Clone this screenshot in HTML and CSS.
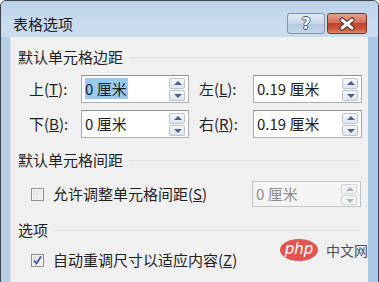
FILE: index.html
```html
<!DOCTYPE html>
<html lang="zh-CN">
<head>
    <meta charset="UTF-8">
    <title>表格选项</title>
    <link rel="stylesheet" href="styles.css">
</head>
<body>
    <div class="window">
        <div class="titlebar">
            <span class="title">表格选项</span>
            <div class="caption-btns">
                <button class="cap-btn help">?</button>
                <button class="cap-btn close">
                    <svg width="18" height="14" viewBox="0 0 18 14">
                        <path d="M4 3 L14 11 M14 3 L4 11" stroke="#4a2a24" stroke-width="5" stroke-linecap="round"/>
                        <path d="M4 3 L14 11 M14 3 L4 11" stroke="#fff" stroke-width="3" stroke-linecap="round"/>
                    </svg>
                </button>
            </div>
        </div>
        <div class="content">
            <div class="group-title first"><span>默认单元格边距</span></div>
            <div class="margins">
                <label>上(<u>T</u>):</label>
                <div class="spin"><span class="val"><span class="sel">0 厘米</span></span><div class="arrows"><span class="up"></span><span class="down"></span></div></div>
                <label class="right-label">左(<u>L</u>):</label>
                <div class="spin"><span class="val">0.19 厘米</span><div class="arrows"><span class="up"></span><span class="down"></span></div></div>
                <label>下(<u>B</u>):</label>
                <div class="spin"><span class="val">0 厘米</span><div class="arrows"><span class="up"></span><span class="down"></span></div></div>
                <label class="right-label">右(<u>R</u>):</label>
                <div class="spin"><span class="val">0.19 厘米</span><div class="arrows"><span class="up"></span><span class="down"></span></div></div>
            </div>

            <div class="group-title second"><span>默认单元格间距</span></div>
            <div class="check-row spacing">
                <span class="checkbox"></span>
                <span class="check-text">允许调整单元格间距(<u>S</u>)</span>
                <div class="spin disabled"><span class="val">0 厘米</span><div class="arrows"><span class="up"></span><span class="down"></span></div></div>
            </div>

            <div class="group-title third"><span>选项</span></div>
            <div class="check-row auto">
                <span class="checkbox checked">
                    <svg width="11" height="11" viewBox="0 0 11 11">
                        <path d="M2 5.5 L4.5 8.5 L9 1.5" fill="none" stroke="#3d5a99" stroke-width="1.8"/>
                    </svg>
                </span>
                <span class="check-text">自动重调尺寸以适应内容(<u>Z</u>)</span>
            </div>
        </div>
        <div class="watermark">
            <span class="php">php</span>
            <span class="cn">中文网</span>
        </div>
    </div>
</body>
</html>
```

FILE: styles.css
```css
body {
    margin: 0;
    padding: 0;
    font-family: 'Noto Sans CJK SC', 'Microsoft YaHei', sans-serif;
    background: #fff;
}
.window {
    position: relative;
    width: 377px;
    height: 290px;
    border: 1px solid #3c4650;
    border-radius: 6px 6px 0 0;
    background: linear-gradient(to right, #b7cde4 0%, #c6d8ec 40%, #bcd2ea 80%, #a9c6e6 100%);
    overflow: hidden;
    display: flex;
    flex-direction: column;
}
.titlebar {
    height: 36px;
    display: flex;
    align-items: flex-start;
    justify-content: space-between;
    padding: 0 11px 0 12px;
    background: linear-gradient(to bottom, #bcd2ea, #c9dbee 60%, #cadcee);
}
.title {
    margin-top: 13px;
    font-size: 15px;
    line-height: 20px;
    color: #1b1b1b;
}
.caption-btns {
    display: flex;
    gap: 2px;
    margin-top: 12px;
}
.cap-btn {
    height: 21px;
    padding: 0;
    border-radius: 3px;
    display: flex;
    align-items: center;
    justify-content: center;
}
.help {
    width: 38px;
    border: 1px solid #7d95b0;
    background: linear-gradient(to bottom, #e2ebf5, #c6d7ea 50%, #b3c9e0 51%, #c4d6ea);
    color: #fff;
    font-family: 'DejaVu Sans', sans-serif;
    font-weight: bold;
    font-size: 15px;
    text-shadow: 1px 0 #4a5a6c, -1px 0 #4a5a6c, 0 1px #4a5a6c, 0 -1px #4a5a6c;
}
.close {
    width: 40px;
    border: 1px solid #7a3328;
    background: linear-gradient(to bottom, #e6a08f, #d6705b 45%, #c2412a 50%, #cd5a3f 80%, #dc8a6c);
}
.content {
    flex: 1;
    margin: 0 10px 0 9px;
    background: #f0f0f0;
    border-left: 1px solid #d7e2ee;
    padding: 10px 7px 0 7px;
    font-size: 15px;
    color: #1e1e1e;
}
.group-title {
    display: flex;
    align-items: center;
    line-height: 20px;
    padding-right: 1px;
}
.group-title::after {
    content: "";
    flex: 1;
    height: 1px;
    margin-left: 6px;
    background: #dcdfe3;
}
.group-title.second {
    margin-top: 12px;
}
.group-title.third {
    margin-top: 13px;
}
.margins {
    display: grid;
    grid-template-columns: 52px 108px 64px 109px;
    grid-auto-rows: 28px;
    row-gap: 7px;
    margin-top: 8px;
    padding-left: 11px;
    align-items: center;
}
.margins label {
    line-height: 20px;
}
.margins .right-label {
    padding-left: 10px;
}
.spin {
    height: 28px;
    box-sizing: border-box;
    border: 1px solid #abadb3;
    border-top-color: #8e9094;
    background: #fff;
    display: flex;
    align-items: center;
    justify-content: space-between;
    padding: 0 3px 0 2px;
}
.val {
    font-size: 15px;
    line-height: 20px;
    padding-left: 1px;
}
.sel {
    background: #99c9ef;
    padding: 0 1px 0 0;
}
.arrows {
    width: 16px;
    display: flex;
    flex-direction: column;
    gap: 1px;
}
.arrows span {
    height: 9px;
    border: 1px solid #b9c4d0;
    border-radius: 2px;
    background: linear-gradient(to bottom, #f4f7fa, #dfe6ee);
    position: relative;
}
.arrows span::after {
    content: "";
    position: absolute;
    left: 4px;
    border-left: 4px solid transparent;
    border-right: 4px solid transparent;
}
.arrows .up::after {
    top: 2px;
    border-bottom: 4px solid #4d6185;
}
.arrows .down::after {
    top: 3px;
    border-top: 4px solid #4d6185;
}
.check-row {
    display: flex;
    align-items: center;
    padding-left: 13px;
}
.check-row.spacing {
    margin-top: 11px;
    height: 26px;
}
.check-row.auto {
    margin-top: 10px;
    height: 20px;
}
.checkbox {
    width: 13px;
    height: 13px;
    box-sizing: border-box;
    border: 1px solid #8e8f8f;
    background: linear-gradient(135deg, #dcdcdc, #f6f6f6);
    box-shadow: inset 0 0 0 1px #f4f4f4;
    display: flex;
    align-items: center;
    justify-content: center;
}
.check-text {
    margin-left: 9px;
    line-height: 20px;
}
.spin.disabled {
    margin-left: auto;
    width: 109px;
    height: 26px;
    border-color: #c2c4c8;
    background: #f4f4f4;
    color: #8d8d8d;
}
.spin.disabled .arrows span {
    height: 8px;
    border-color: #d0d5da;
    background: #f3f3f3;
}
.spin.disabled .arrows .up::after {
    border-bottom-color: #a9b0ba;
}
.spin.disabled .arrows .down::after {
    border-top-color: #a9b0ba;
}
.watermark {
    position: absolute;
    left: 279px;
    top: 238px;
    display: flex;
    align-items: center;
    gap: 8px;
}
.php {
    width: 38px;
    height: 22px;
    border-radius: 50%;
    background: #e3534f;
    color: #fff;
    font-family: 'DejaVu Sans', sans-serif;
    font-style: italic;
    font-size: 15px;
    line-height: 20px;
    text-align: center;
}
.cn {
    font-size: 14px;
    color: #4e4e4e;
    line-height: 20px;
}
```
